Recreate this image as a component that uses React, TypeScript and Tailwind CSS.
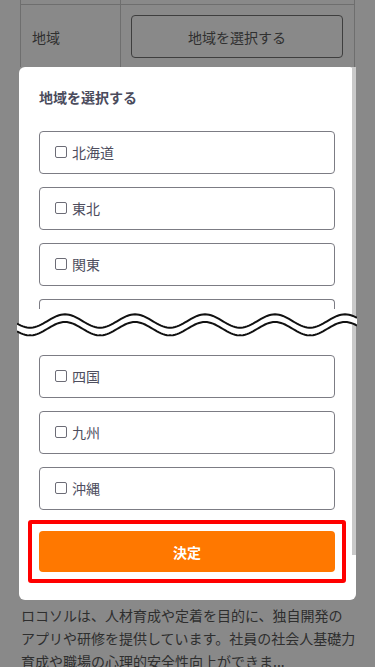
import React from "react";

const regionsTop = ["北海道", "東北", "関東"];
const regionsBottom = ["四国", "九州", "沖縄"];

// points of one wavy line, 340px wide
function wavePoints(center: number) {
   const pts: [number, number][] = [];
   for (let x = 0; x <= 340; x += 2) {
      const y = center - 6.7 * Math.cos((2 * Math.PI * (x - 48)) / 70);
      pts.push([x, y]);
   }
   return pts;
}

function Wave() {
   const upper = wavePoints(10);
   const lower = wavePoints(17.7);
   const toPath = (pts: [number, number][]) =>
      pts.map((p, i) => `${i === 0 ? "M" : "L"}${p[0]} ${p[1].toFixed(2)}`).join(" ");
   const band =
      toPath(upper) +
      " " +
      [...lower].reverse().map((p) => `L${p[0]} ${p[1].toFixed(2)}`).join(" ") +
      " Z";
   return (
      <svg
         className="absolute left-[-22px] top-[12px]"
         width="340"
         height="28"
         viewBox="0 0 340 28"
      >
         <path d={band} fill="#ffffff" />
         <path d={toPath(upper)} fill="none" stroke="#111" strokeWidth="2" />
         <path d={toPath(lower)} fill="none" stroke="#111" strokeWidth="2" />
      </svg>
   );
}

function Option({ label }: { label: string }) {
   return (
      <label className="flex items-center h-[43px] pl-[15px] pb-[2px] border border-[#7c7c84] rounded-[4px] bg-white">
         <span className="w-[12px] h-[12px] border border-[#6c6c76] rounded-[2px] bg-white" />
         <span className="ml-[5px] text-sm leading-5 text-[#4e4e5e]">{label}</span>
      </label>
   );
}

export default function App() {
   return (
      <div
         className="w-[375px] h-[667px] overflow-hidden bg-[#898989] flex flex-col"
         style={{ fontFamily: '"Noto Sans CJK JP", "Noto Sans", sans-serif' }}
      >
         {/* page behind the modal */}
         <div className="h-[67px] shrink-0 overflow-hidden">
            <div className="mx-[20px] border-x border-[#6e6e6e]">
               <div className="flex h-[4px]">
                  <div className="w-[100px] border-r border-[#6e6e6e]" />
               </div>
               <div className="flex border-t border-[#6e6e6e]">
                  <div className="w-[100px] flex items-center pl-[11px] border-r border-[#6e6e6e] text-sm text-[#303030]">
                     地域
                  </div>
                  <div className="flex-1 pt-[10px] pb-[10px] pl-[10px] pr-[11px]">
                     <div className="h-[43px] flex items-center justify-center border border-[#3e3e3e] rounded-[4px] text-sm text-[#303030]">
                        地域を選択する
                     </div>
                  </div>
               </div>
            </div>
         </div>

         {/* modal */}
         <div className="mx-[19px] flex bg-white rounded-md shrink-0">
            <div className="flex-1 pl-5 pr-[17px] pt-[20px] pb-[17px]">
               <p className="text-sm leading-5 font-bold text-[#4a4b5c]">地域を選択する</p>
               <div className="mt-[24px] flex flex-col gap-[13px]">
                  {regionsTop.map((r) => (
                     <Option key={r} label={r} />
                  ))}
                  <div className="relative h-[43px]">
                     <div className="h-[10px] border-x border-t border-[#7c7c84] rounded-t-[4px]" />
                     <Wave />
                  </div>
                  {regionsBottom.map((r) => (
                     <Option key={r} label={r} />
                  ))}
               </div>
               <div className="mt-[10px] -mx-[11px] border-4 border-[#ff0000] rounded-[3px] p-[7px]">
                  <button className="w-full h-[41px] rounded-[4px] bg-[#ff7800] text-white text-sm font-bold">
                     決定
                  </button>
               </div>
            </div>
            <div className="w-[4px] pb-[45px]">
               <div className="h-full bg-[#c9c9c9]" />
            </div>
         </div>

         {/* page text below */}
         <div className="pl-[21px] pr-[12px] pt-[4px] text-sm leading-[23px] text-[#2e2e2e]">
            <p>ロコソルは、人材育成や定着を目的に、独自開発の</p>
            <p>アプリや研修を提供しています。社員の社会人基礎力</p>
            <p>育成や職場の心理的安全性向上ができま...</p>
         </div>
      </div>
   );
}
